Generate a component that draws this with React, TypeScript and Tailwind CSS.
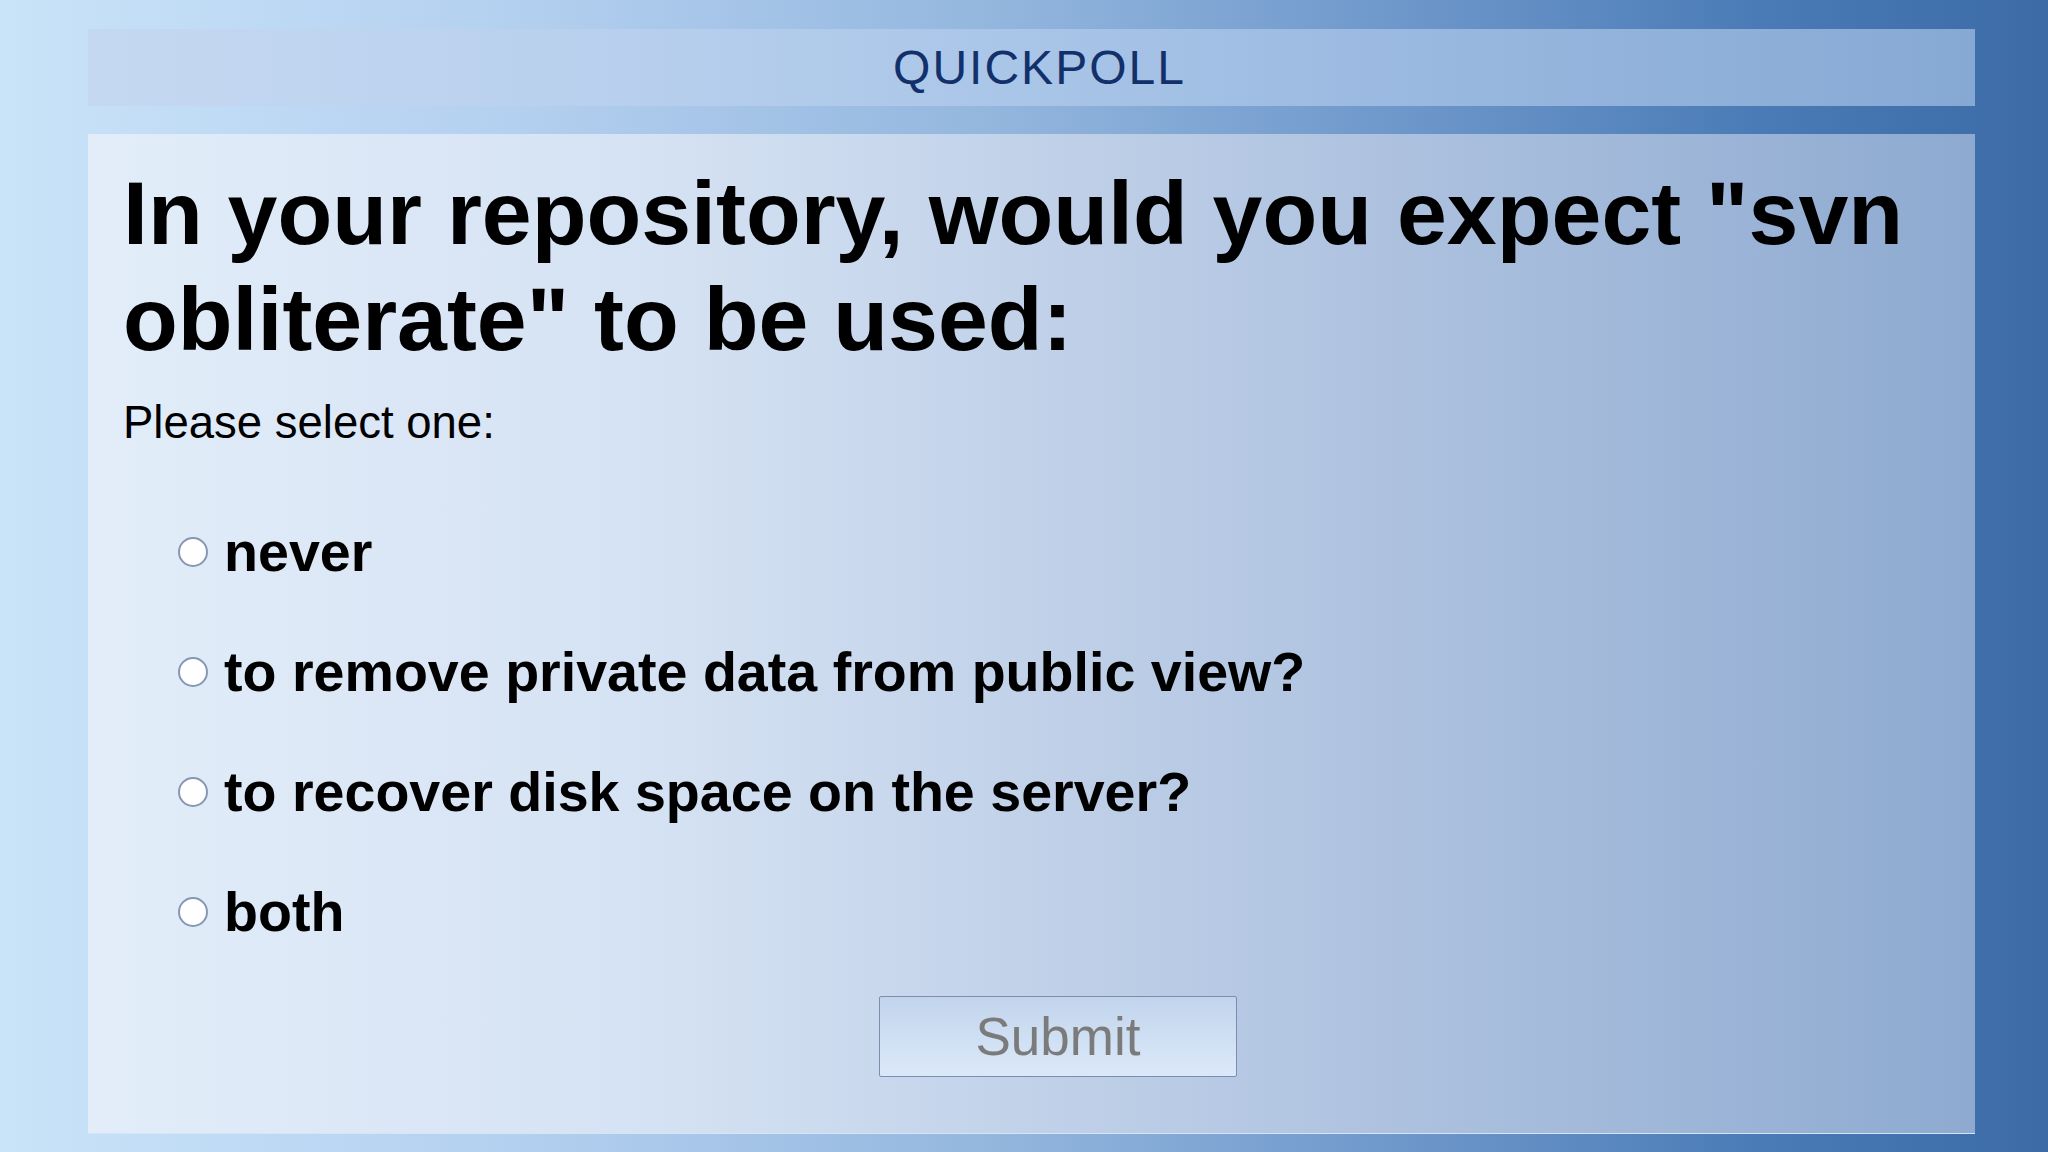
import React from "react";

const options = [
  "never",
  "to remove private data from public view?",
  "to recover disk space on the server?",
  "both",
];

export default function App() {
  return (
    <div
      className="w-[2048px] h-[1152px] overflow-hidden flex flex-col pt-[29px] pb-[19px] gap-[28px] bg-[linear-gradient(to_right,#c9e3f8_0%,#b4d0f0_25%,#94b7de_48%,#6b95c9_70%,#4a7bb6_86%,#3c6ba6_100%)]"
      style={{ fontFamily: '"Liberation Sans", Arial, sans-serif' }}
    >
      <div className="ml-[88px] w-[1887px] h-[77px] shrink-0 flex items-center justify-center pl-[16px] bg-[linear-gradient(to_right,#c5d8f1_0%,#b7cfed_30%,#a5c2e6_55%,#93b3dc_80%,#86a9d3_100%)]">
        <span className="text-[48px] leading-none tracking-[2px] text-[#12306a]">
          QUICKPOLL
        </span>
      </div>

      <div className="ml-[88px] w-[1887px] h-[999px] shrink-0 flex flex-col pl-[35px] pr-[30px] pt-[26px] bg-[linear-gradient(to_right,#e2edf9_0%,#d5e2f3_30%,#bccde6_55%,#a2b9da_80%,#8eaad0_100%)] shadow-[0_1px_0_#d6e4f5]">
        <h1 className="text-[89.7px] leading-[106px] font-bold text-black">
          In your repository, would you expect "svn obliterate" to be used:
        </h1>
        <p className="mt-[26px] text-[45.5px] leading-[50px] text-black">
          Please select one:
        </p>

        <div className="mt-[44px] flex flex-col pl-[55px]">
          {options.map((o) => (
            <label key={o} className="h-[120px] flex items-center gap-[16px]">
              <span className="w-[30px] h-[30px] rounded-full bg-white border-2 border-[#8697b4] shrink-0" />
              <span className="text-[55.6px] leading-[120px] font-bold text-black">
                {o}
              </span>
            </label>
          ))}
        </div>

        <div className="mt-[24px] flex justify-center pl-[48px]">
          <button className="w-[358px] h-[81px] flex items-center justify-center border border-[#7a8fae] rounded-[2px] bg-[linear-gradient(to_bottom,#c1d4ec_0%,#cfdff3_50%,#dbe8f9_100%)] text-[53px] text-[#7b7b7b]">
            Submit
          </button>
        </div>
      </div>
    </div>
  );
}
